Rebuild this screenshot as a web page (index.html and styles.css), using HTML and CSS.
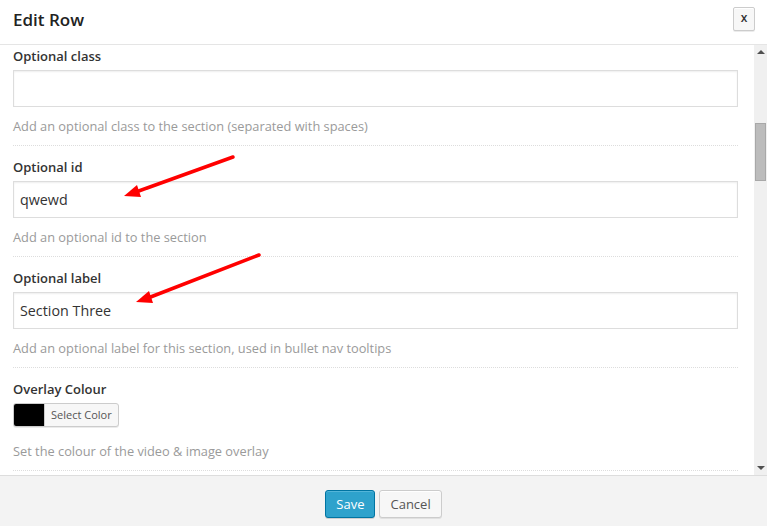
FILE: index.html
```html
<!DOCTYPE html>
<html lang="en">

<head>
    <meta charset="UTF-8">
    <meta name="viewport" content="width=device-width, initial-scale=1.0">
    <title>Edit Row</title>
    <link rel="stylesheet" href="styles.css">
</head>

<body>
    <div class="modal">
        <header class="modal-header">
            <h1>Edit Row</h1>
            <button class="close" type="button">x</button>
        </header>

        <div class="modal-body">
            <div class="panel">
                <div class="field">
                    <label>Optional class</label>
                    <input type="text" value="">
                    <p class="desc">Add an optional class to the section (separated with spaces)</p>
                </div>
                <div class="field">
                    <label>Optional id</label>
                    <input type="text" value="qwewd">
                    <p class="desc">Add an optional id to the section</p>
                </div>
                <div class="field">
                    <label>Optional label</label>
                    <input type="text" value="Section Three">
                    <p class="desc">Add an optional label for this section, used in bullet nav tooltips</p>
                </div>
                <div class="field field-colour">
                    <label>Overlay Colour</label>
                    <button class="color-picker" type="button">
                        <span class="swatch"></span>
                        <span class="color-text">Select Color</span>
                    </button>
                    <p class="desc">Set the colour of the video &amp; image overlay</p>
                </div>
            </div>
            <div class="scrollbar">
                <span class="arrow-up"></span>
                <span class="thumb"></span>
                <span class="arrow-down"></span>
            </div>
        </div>

        <footer class="modal-footer">
            <button class="btn btn-primary" type="button">Save</button>
            <button class="btn" type="button">Cancel</button>
        </footer>
    </div>

    <!-- hand drawn annotation arrows -->
    <svg class="annotations" width="767" height="526" viewBox="0 0 767 526">
        <line x1="233" y1="157" x2="136" y2="192" stroke="#f00" stroke-width="3.5" stroke-linecap="round" />
        <polygon points="124,196 137,185 141,197" fill="#f00" />
        <line x1="259" y1="255" x2="148" y2="298" stroke="#f00" stroke-width="3.5" stroke-linecap="round" />
        <polygon points="136,302 149,291 153,303" fill="#f00" />
    </svg>
</body>

</html>
```

FILE: styles.css
```css
:root {
    --text-color: #333;
    --muted-color: #9a9a9a;
    --border-color: #ddd;
    --button-bg: #f7f7f7;
    --button-border: #ccc;
    --primary-color: #2ea2cc;
    --primary-border: #0074a2;
}

html,
body {
    margin: 0;
    padding: 0;
    font-family: "Open Sans", "Noto Sans", sans-serif;
    color: var(--text-color);
    background-color: #fff;
}

.modal {
    display: flex;
    flex-direction: column;
    width: 767px;
    height: 526px;
    overflow: hidden;
}

.modal-header,
.modal-body,
.modal-footer {
    flex-shrink: 0;
    box-sizing: border-box;
}

.modal-header {
    display: flex;
    align-items: flex-start;
    justify-content: space-between;
    height: 45px;
    padding: 7px 12px 0 13px;
    border-bottom: 1px solid #e5e5e5;
}

.modal-header h1 {
    margin: 0;
    font-size: 17px;
    line-height: 26px;
    font-weight: 600;
    color: #222;
}

.close {
    width: 22px;
    height: 24px;
    padding: 0 0 3px;
    border: 1px solid var(--button-border);
    border-radius: 2px;
    background-color: var(--button-bg);
    box-shadow: 0 1px 0 #fff inset, 0 1px 0 rgba(0, 0, 0, .08);
    font-family: inherit;
    font-size: 12px;
    font-weight: 600;
    color: #333;
}

.modal-body {
    display: flex;
    height: 430px;
}

.panel {
    flex: 1;
    padding: 0 16px 0 13px;
    overflow: hidden;
}

.field {
    padding: 12px 0 10px;
    border-bottom: 1px dotted var(--border-color);
}

.field:first-child {
    padding-top: 2px;
}

.field label {
    display: block;
    font-size: 13px;
    line-height: 18px;
    font-weight: 600;
    color: #333;
}

.field input {
    display: block;
    box-sizing: border-box;
    width: 100%;
    height: 37px;
    margin-top: 5px;
    padding: 0 6px;
    border: 1px solid var(--border-color);
    box-shadow: inset 0 1px 2px rgba(0, 0, 0, .07);
    font-family: inherit;
    font-size: 14.3px;
    color: #333;
    outline: none;
}

.desc {
    margin: 10px 0 0;
    font-size: 12.8px;
    line-height: 18px;
    color: var(--muted-color);
}

.field-colour .desc {
    margin-top: 15px;
}

.color-picker {
    display: flex;
    align-items: stretch;
    box-sizing: border-box;
    height: 24px;
    margin-top: 5px;
    padding: 0;
    border: 1px solid var(--button-border);
    border-radius: 3px;
    background-color: var(--button-bg);
    box-shadow: 0 1px 0 rgba(0, 0, 0, .08);
    overflow: hidden;
    font-family: inherit;
}

.swatch {
    width: 30px;
    background-color: #000;
    border-right: 1px solid var(--button-border);
}

.color-text {
    padding: 0 6px;
    font-size: 11px;
    line-height: 22px;
    color: #555;
}

.scrollbar {
    display: flex;
    flex-direction: column;
    align-items: center;
    width: 13px;
    background-color: #f0f0f0;
}

.arrow-up,
.arrow-down {
    width: 0;
    height: 0;
    border-left: 4px solid transparent;
    border-right: 4px solid transparent;
}

.arrow-up {
    margin-top: 5px;
    border-bottom: 4px solid #505050;
}

.thumb {
    box-sizing: border-box;
    width: 11px;
    height: 58px;
    margin-top: 69px;
    background-color: #bcbcbc;
    border: 1px solid #a8a8a8;
}

.arrow-down {
    margin-top: auto;
    margin-bottom: 5px;
    border-top: 4px solid #505050;
}

.modal-footer {
    display: flex;
    justify-content: center;
    gap: 4px;
    height: 51px;
    padding-top: 14px;
    border-top: 1px solid var(--border-color);
    background-color: #f3f3f3;
}

.btn {
    height: 28px;
    padding: 0 10px;
    border: 1px solid var(--button-border);
    border-radius: 3px;
    background-color: var(--button-bg);
    box-shadow: inset 0 1px 0 #fff, 0 1px 0 rgba(0, 0, 0, .08);
    font-family: inherit;
    font-size: 13px;
    color: #555;
}

.btn-primary {
    background-color: var(--primary-color);
    border-color: var(--primary-border);
    box-shadow: inset 0 1px 0 rgba(120, 200, 230, .5), 0 1px 0 rgba(0, 0, 0, .15);
    color: #fff;
}

.annotations {
    position: absolute;
    top: 0;
    left: 0;
    pointer-events: none;
}
```
